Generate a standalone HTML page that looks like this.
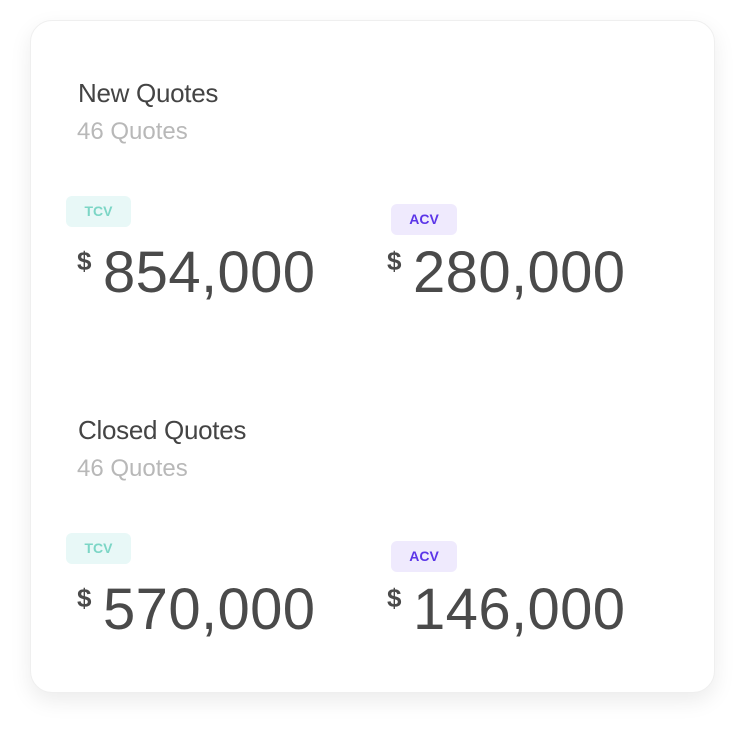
<!DOCTYPE html>
<html><head><meta charset="utf-8"><style>
body{margin:0;width:745px;height:733px;background:#fff;font-family:"Liberation Sans",Arial,sans-serif;position:relative;overflow:hidden}
.card{position:absolute;left:30px;top:20px;width:685px;height:673px;border-radius:22px;background:#fff;box-shadow:0 8px 22px rgba(0,0,0,0.08);border:1px solid #efefef;box-sizing:border-box}
.a{position:absolute;white-space:nowrap}
.t{font-size:26px;line-height:26px;color:#444;letter-spacing:-0.3px}
.s{font-size:24px;line-height:24px;color:#b8b8b8}
.b{font-size:14px;font-weight:bold;border-radius:6px;text-align:center;line-height:31px;height:31px;width:65px}
.tcv{background:#e8f8f7;color:#7cd6c6}
.acv{background:#efeafd;color:#5b35e8;width:66px}
.n{font-size:58px;line-height:58px;color:#4a4a4a;letter-spacing:0.4px}
.d{font-size:26px;line-height:26px;color:#4a4a4a;font-weight:bold}
</style></head><body>
<div class="card"></div>
<div class="a t" style="left:78px;top:80px">New Quotes</div>
<div class="a s" style="left:77px;top:120px">46 Quotes</div>
<div class="a b tcv" style="left:66px;top:196px">TCV</div>
<div class="a b acv" style="left:391px;top:204px">ACV</div>
<div class="a d" style="left:77px;top:248px">$</div>
<div class="a n" style="left:103px;top:244px">854,000</div>
<div class="a d" style="left:387px;top:248px">$</div>
<div class="a n" style="left:413px;top:244px">280,000</div>

<div class="a t" style="left:78px;top:417px">Closed Quotes</div>
<div class="a s" style="left:77px;top:457px">46 Quotes</div>
<div class="a b tcv" style="left:66px;top:533px">TCV</div>
<div class="a b acv" style="left:391px;top:541px">ACV</div>
<div class="a d" style="left:77px;top:585px">$</div>
<div class="a n" style="left:103px;top:581px">570,000</div>
<div class="a d" style="left:387px;top:585px">$</div>
<div class="a n" style="left:413px;top:581px">146,000</div>
</body></html>
